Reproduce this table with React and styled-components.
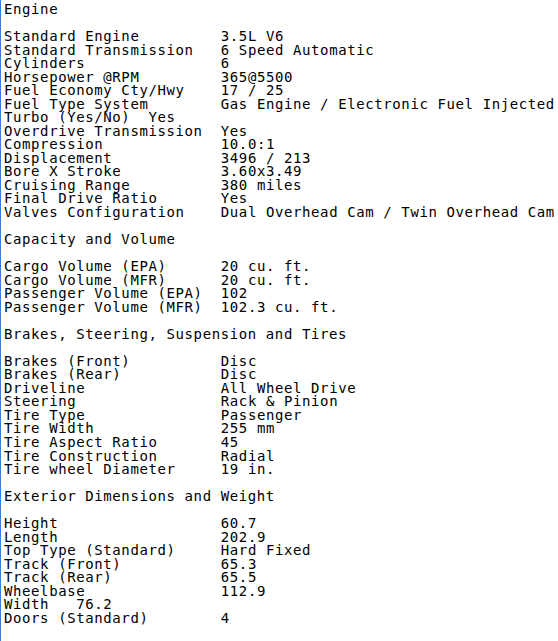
import styled, { createGlobalStyle } from "styled-components";

const GlobalStyle = createGlobalStyle`
  html, body {
    margin: 0;
    padding: 0;
    background: #ffffff;
  }
`;

const Sheet = styled.div`
  box-sizing: border-box;
  width: 558px;
  height: 641px;
  overflow: hidden;
  border-left: 1px solid #3d7bd8;
  padding: 3px 0 0 3px;
  font-family: "DejaVu Sans Mono", "Liberation Mono", monospace;
  font-size: 14px;
  letter-spacing: 0.6px;
  line-height: 13.54px;
  color: #000;
  background: #fff;
  white-space: pre;
`;

const Section = styled.section`
  display: flex;
  flex-direction: column;
  margin-bottom: 13.54px;
`;

const Heading = styled.div`
  height: 13.54px;
  margin-bottom: 13.54px;
`;

const Row = styled.div`
  display: grid;
  grid-template-columns: ${(p) => (p.$loose ? "auto" : "216.8px 1fr")};
  height: 13.54px;
`;

const specs = [
  {
    title: "Engine",
    rows: [
      ["Standard Engine", "3.5L V6"],
      ["Standard Transmission", "6 Speed Automatic"],
      ["Cylinders", "6"],
      ["Horsepower @RPM", "365@5500"],
      ["Fuel Economy Cty/Hwy", "17 / 25"],
      ["Fuel Type System", "Gas Engine / Electronic Fuel Injected"],
      ["Turbo (Yes/No)  Yes"],
      ["Overdrive Transmission", "Yes"],
      ["Compression", "10.0:1"],
      ["Displacement", "3496 / 213"],
      ["Bore X Stroke", "3.60x3.49"],
      ["Cruising Range", "380 miles"],
      ["Final Drive Ratio", "Yes"],
      ["Valves Configuration", "Dual Overhead Cam / Twin Overhead Cam"],
    ],
  },
  {
    title: "Capacity and Volume",
    rows: [
      ["Cargo Volume (EPA)", "20 cu. ft."],
      ["Cargo Volume (MFR)", "20 cu. ft."],
      ["Passenger Volume (EPA)", "102"],
      ["Passenger Volume (MFR)", "102.3 cu. ft."],
    ],
  },
  {
    title: "Brakes, Steering, Suspension and Tires",
    rows: [
      ["Brakes (Front)", "Disc"],
      ["Brakes (Rear)", "Disc"],
      ["Driveline", "All Wheel Drive"],
      ["Steering", "Rack & Pinion"],
      ["Tire Type", "Passenger"],
      ["Tire Width", "255 mm"],
      ["Tire Aspect Ratio", "45"],
      ["Tire Construction", "Radial"],
      ["Tire wheel Diameter", "19 in."],
    ],
  },
  {
    title: "Exterior Dimensions and Weight",
    rows: [
      ["Height", "60.7"],
      ["Length", "202.9"],
      ["Top Type (Standard)", "Hard Fixed"],
      ["Track (Front)", "65.3"],
      ["Track (Rear)", "65.5"],
      ["Wheelbase", "112.9"],
      ["Width   76.2"],
      ["Doors (Standard)", "4"],
    ],
  },
];

export default function App() {
  return (
    <>
      <GlobalStyle />
      <Sheet>
        {specs.map((section) => (
          <Section key={section.title}>
            <Heading>{section.title}</Heading>
            {section.rows.map((row) => (
              <Row key={row[0]} $loose={row.length === 1}>
                <span>{row[0]}</span>
                {row.length > 1 && <span>{row[1]}</span>}
              </Row>
            ))}
          </Section>
        ))}
      </Sheet>
    </>
  );
}
